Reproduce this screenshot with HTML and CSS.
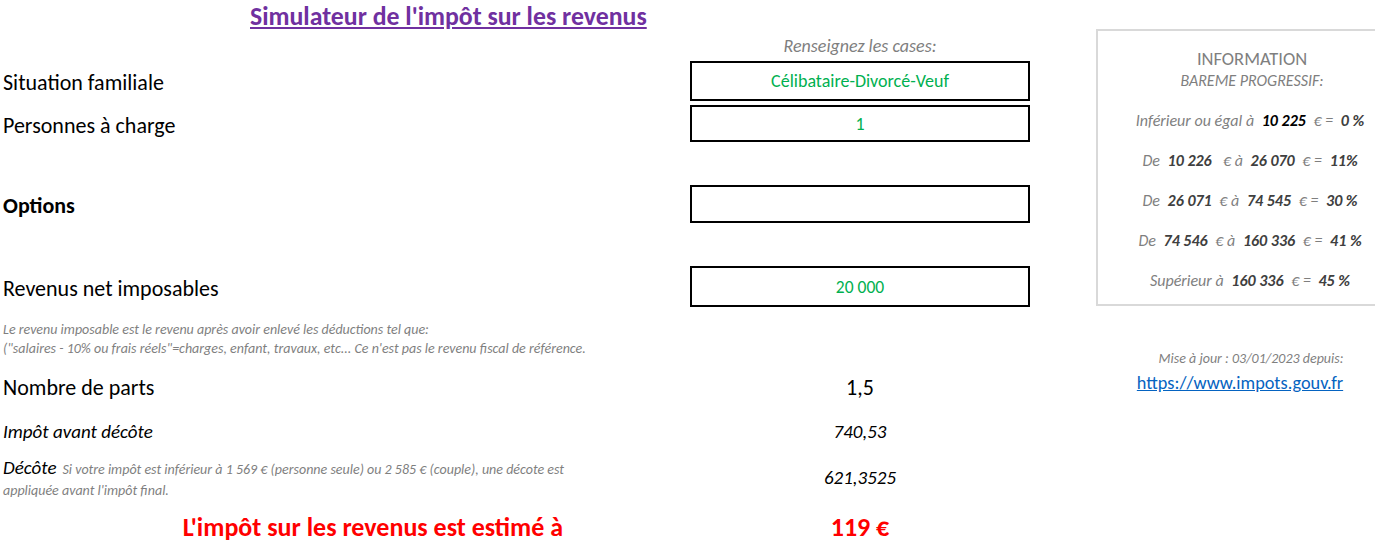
FILE: index.html
```html
<!DOCTYPE html>
<html lang="fr">
<head>
    <meta charset="UTF-8">
    <title>Simulateur de l'impôt sur les revenus</title>
    <link rel="stylesheet" href="styles.css">
</head>
<body>
    <div class="sheet">
        <div class="main">
            <h1 class="title">Simulateur de l'impôt sur les revenus</h1>

            <div class="row row-hint">
                <span></span>
                <span class="hint">Renseignez les cases:</span>
            </div>

            <div class="row row-input">
                <span class="label">Situation familiale</span>
                <div class="cell">Célibataire-Divorcé-Veuf</div>
            </div>

            <div class="row row-input row-tight">
                <span class="label">Personnes à charge</span>
                <div class="cell cell-num">1</div>
            </div>

            <div class="row row-input row-options">
                <span class="label label-bold">Options</span>
                <div class="cell"></div>
            </div>

            <div class="row row-input row-income">
                <span class="label">Revenus net imposables</span>
                <div class="cell cell-small">20 000</div>
            </div>

            <p class="note">
                Le revenu imposable est le revenu après avoir enlevé les déductions tel que:<br>
                ("salaires - 10% ou frais réels"=charges, enfant, travaux, etc... Ce n'est pas le revenu fiscal de référence.
            </p>

            <div class="row row-result row-parts">
                <span class="label">Nombre de parts</span>
                <span class="value">1,5</span>
            </div>

            <div class="row row-result row-before">
                <span class="label label-italic">Impôt avant décôte</span>
                <span class="value value-italic">740,53</span>
            </div>

            <div class="row row-result row-decote">
                <div class="decote">
                    <div class="decote-line"><span class="decote-name">Décôte</span><span class="decote-note">Si votre impôt est inférieur à 1 569 € (personne seule) ou 2 585 € (couple), une décote est</span></div>
                    <div class="decote-line decote-note">appliquée avant l'impôt final.</div>
                </div>
                <span class="value value-italic">621,3525</span>
            </div>

            <div class="row row-result row-total">
                <span class="total-label">L'impôt sur les revenus est estimé à</span>
                <span class="value total-value">119 €</span>
            </div>
        </div>

        <aside class="side">
            <div class="info">
                <div class="info-title">INFORMATION</div>
                <div class="info-sub">BAREME PROGRESSIF:</div>
                <ul class="scale">
                    <li>Inférieur ou égal à <b class="black">10 225</b> € = <b>0 %</b></li>
                    <li>De <b>10 226</b> &nbsp;€ à <b>26 070</b> € = <b>11%</b></li>
                    <li>De <b>26 071</b> € à <b>74 545</b> € = <b>30 %</b></li>
                    <li>De <b>74 546</b> € à <b>160 336</b> € = <b>41 %</b></li>
                    <li>Supérieur à <b>160 336</b> € = <b>45 %</b></li>
                </ul>
            </div>
            <p class="update">Mise à jour : 03/01/2023 depuis:</p>
            <a class="source" href="#">https://www.impots.gouv.fr</a>
        </aside>
    </div>
</body>
</html>
```

FILE: styles.css
```css
body {
    margin: 0;
    font-family: 'Carlito', 'Liberation Sans', sans-serif;
    color: #000;
    background: #fff;
}

.sheet {
    display: flex;
    align-items: flex-start;
}

.main {
    width: 1030px;
}

.title {
    margin: 0;
    padding: 1px 0 0 250px;
    height: 33px;
    font-size: 25.8px;
    font-weight: bold;
    color: #7030a0;
    text-decoration: underline;
    line-height: 30px;
}

.row {
    display: grid;
    grid-template-columns: 690px 340px;
    align-items: center;
}

.row-hint {
    height: 27px;
    align-items: start;
}

.hint {
    text-align: center;
    font-style: italic;
    font-size: 18px;
    line-height: 24px;
    color: #7f7f7f;
}

.row-input {
    height: 40px;
}

.row-tight {
    margin-top: 4px;
    height: 37px;
}

.row-options {
    margin-top: 43px;
    height: 38px;
}

.row-income {
    margin-top: 43px;
    height: 41px;
}

.label {
    padding-left: 3px;
    font-size: 22px;
}

.row-input .label {
    padding-top: 3px;
}

.row-income .label {
    padding-top: 4px;
}

.label-bold {
    font-weight: bold;
}

.label-italic {
    font-style: italic;
    font-size: 19px;
}

.cell {
    box-sizing: border-box;
    height: 100%;
    border: 2px solid #000;
    display: flex;
    align-items: center;
    justify-content: center;
    font-size: 18px;
    color: #00b050;
}

.cell-small {
    font-size: 17.5px;
}

.note {
    margin: 13px 0 0 3px;
    font-size: 14px;
    line-height: 19px;
    font-style: italic;
    color: #7f7f7f;
}

.row-result .value {
    text-align: center;
}

.row-parts {
    margin-top: 11px;
    height: 36px;
    font-size: 22px;
}

.row-before {
    margin-top: 6px;
    height: 40px;
}

.value-italic {
    font-style: italic;
    font-size: 19px;
}

.row-decote {
    margin-top: 6px;
    height: 44px;
    align-items: start;
}

.decote {
    padding-left: 3px;
    font-style: italic;
}

.decote-line {
    line-height: 22px;
}

.decote-name {
    font-size: 19px;
    margin-right: 6px;
}

.decote-note {
    font-size: 14px;
    color: #7f7f7f;
}

.decote-line.decote-note {
    line-height: 20px;
}

.row-decote .value {
    padding-top: 10px;
    line-height: 22px;
}

.row-total {
    margin-top: 8px;
    height: 36px;
}

.total-label {
    text-align: right;
    padding-right: 127px;
    font-size: 26px;
    font-weight: bold;
    color: #ff0000;
}

.total-value {
    font-size: 26px;
    font-weight: bold;
    color: #ff0000;
}

.side {
    margin: 29px 0 0 66px;
    width: 310px;
}

.info {
    box-sizing: border-box;
    width: 330px;
    height: 277px;
    border: 2px solid #d9d9d9;
    padding: 17px 18px 0 0;
    text-align: center;
    color: #7f7f7f;
}

.info-title {
    font-size: 18.5px;
    line-height: 22px;
}

.info-sub {
    font-size: 16px;
    font-style: italic;
    line-height: 22px;
}

.scale {
    list-style: none;
    margin: 9px 0 0;
    padding: 0;
    font-size: 16px;
    line-height: 40px;
    font-style: italic;
}

.scale b {
    color: #404040;
    margin: 0 4px;
}

.scale b.black {
    color: #000;
}

.update {
    margin: 43px 0 0;
    text-align: center;
    font-size: 14px;
    line-height: 20px;
    font-style: italic;
    color: #7f7f7f;
}

.source {
    display: block;
    margin-top: 2px;
    padding-right: 22px;
    text-align: center;
    font-size: 18.3px;
    line-height: 24px;
    color: #0563c1;
}
```
